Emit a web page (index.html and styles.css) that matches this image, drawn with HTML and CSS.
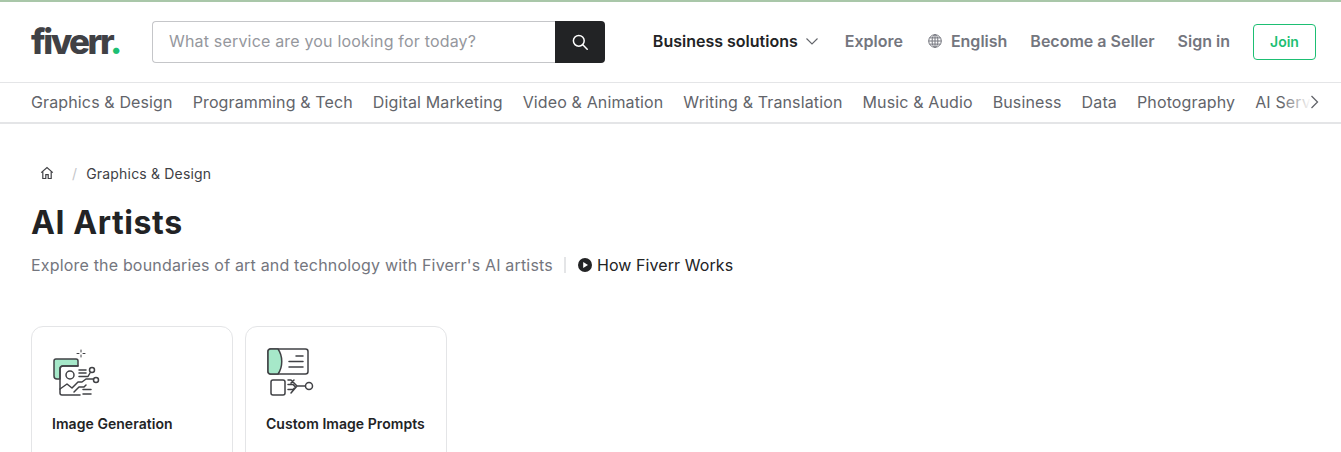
FILE: index.html
```html
<!DOCTYPE html>
<html lang="en">
<head>
  <meta charset="UTF-8">
  <title>AI Artists - Fiverr</title>
  <link rel="stylesheet" href="styles.css">
</head>
<body>
  <header class="header">
    <a class="logo">fiverr<span class="logo-dot">.</span></a>
    <form class="search">
      <input class="search-input" type="text" placeholder="What service are you looking for today?">
      <button class="search-btn" type="button" aria-label="Search">
        <svg width="16" height="16" viewBox="0 0 16 16" fill="none" stroke="#fff" stroke-width="1.5"><circle cx="6.8" cy="6.8" r="5.4"/><path d="M10.8 10.8l4.4 4.4" stroke-linecap="round"/></svg>
      </button>
    </form>
    <nav class="top-links">
      <a class="top-link top-link-dark">Business solutions
        <svg class="top-chevron" width="14" height="14" viewBox="0 0 14 14" fill="none" stroke="#62646a" stroke-width="1.1"><path d="M1.5 4.5L7 10l5.5-5.5"/></svg>
      </a>
      <a class="top-link">Explore</a>
      <a class="top-link top-link-lang">
        <svg width="14" height="14" viewBox="0 0 14 14" fill="none" stroke="#74767e" stroke-width="1"><circle cx="7" cy="7" r="6.3"/><ellipse cx="7" cy="7" rx="2.9" ry="6.3"/><path d="M7 .7v12.6M.7 7h12.6M1.5 3.9h11M1.5 10.1h11"/></svg>
        English</a>
      <a class="top-link">Become a Seller</a>
      <a class="top-link">Sign in</a>
      <a class="join">Join</a>
    </nav>
  </header>

  <div class="cats">
    <ul class="cats-list">
      <li>Graphics &amp; Design</li>
      <li>Programming &amp; Tech</li>
      <li>Digital Marketing</li>
      <li>Video &amp; Animation</li>
      <li>Writing &amp; Translation</li>
      <li>Music &amp; Audio</li>
      <li>Business</li>
      <li>Data</li>
      <li>Photography</li>
      <li>AI Services</li>
    </ul>
    <div class="cats-fade">
      <svg width="10" height="14" viewBox="0 0 10 14" fill="none" stroke="#62646a" stroke-width="1.3"><path d="M1.5 1l6 6-6 6"/></svg>
    </div>
  </div>

  <main class="main">
    <div class="crumbs">
      <svg class="crumb-home" width="14" height="14" viewBox="0 0 14 14" fill="none" stroke="#404145" stroke-width="1.2"><path d="M1.2 6.6L7 1.6l5.8 5M2.8 5.6v6.9h3V8.6h2.4v3.9h3V5.6"/></svg>
      <span class="crumb-sep">/</span>
      <span class="crumb">Graphics &amp; Design</span>
    </div>
    <h1 class="title">AI Artists</h1>
    <div class="sub">
      <span>Explore the boundaries of art and technology with Fiverr's AI artists</span>
      <span class="sub-line"></span>
      <a class="how">
        <svg width="14" height="14" viewBox="0 0 14 14"><circle cx="7" cy="7" r="7" fill="#222325"/><path d="M5.2 3.9l4.8 3.1-4.8 3.1z" fill="#fff"/></svg>
        How Fiverr Works</a>
    </div>
    <div class="cards">
      <a class="card">
        <svg class="card-icon" width="50" height="50" viewBox="0 0 50 50" fill="none" stroke="#404145" stroke-width="1.5" stroke-linecap="round" stroke-linejoin="round">
          <path d="M1 29V14a2 2 0 0 1 2-2h20a2 2 0 0 1 2 2v5H10a3 3 0 0 0-3 3v10H4a3 3 0 0 1-3-3z" fill="#a6e8c9"/>
          <path d="M28 3v2M28 8v2M24 6.5h2M30 6.5h2" stroke-width="1"/>
          <path d="M25 19H10a3 3 0 0 0-3 3v24a2 2 0 0 0 2 2h18"/>
          <circle cx="17" cy="28" r="4"/>
          <path d="M7 42l7-5 5 4 6-6h4l4-3h7.5"/>
          <path d="M26 23h7M26 26h7M26 29.5h9l2-3.5"/>
          <circle cx="39" cy="23" r="2.5"/><circle cx="43" cy="33" r="2.5"/>
          <path d="M21 45l5-5h5l2-2M30 42.5h8M30 47h8"/>
        </svg>
        <span class="card-label">Image Generation</span>
      </a>
      <a class="card">
        <svg class="card-icon" width="50" height="50" viewBox="0 0 50 50" fill="none" stroke="#404145" stroke-width="1.5" stroke-linecap="round" stroke-linejoin="round">
          <rect x="1" y="2" width="40" height="25" rx="2.5"/>
          <path d="M3.5 2H11c5 7 5 18 0 25H3.5A2.5 2.5 0 0 1 1 24.5v-20A2.5 2.5 0 0 1 3.5 2z" fill="#a6e8c9"/>
          <path d="M29 9h7M22 14.5h14M22 20h14"/>
          <rect x="4" y="33" width="14" height="15" rx="2"/>
          <path d="M21 33h3l6 6h8M21 37.5h5l2.500 2.500-2.500 2.500h-5M24 36l3-3M24 46l6-7"/>
          <circle cx="42" cy="39" r="3.5"/>
        </svg>
        <span class="card-label">Custom Image Prompts</span>
      </a>
    </div>
  </main>
</body>
</html>
```

FILE: styles.css
```css
* {
  margin: 0;
  padding: 0;
  box-sizing: border-box;
}

html, body {
  height: 452px;
  overflow: hidden;
}

body {
  font-family: 'Inter', sans-serif;
  font-size: 16px;
  letter-spacing: 0.18px;
  color: #222325;
  background-color: #fff;
  border-top: 2px solid #a9c7a9;
}

.header {
  height: 81px;
  padding: 0 25px 0 31px;
  display: flex;
  align-items: center;
  border-bottom: 1px solid #e4e5e7;
}

.logo {
  width: 121px;
  font-size: 35px;
  font-weight: 800;
  letter-spacing: -2.5px;
  color: #404145;
  line-height: 1;
  margin-top: -2px;
}

.logo-dot {
  color: #1dbf73;
}

.search {
  width: 453px;
  height: 42px;
  display: flex;
}

.search-input {
  flex: 1;
  min-width: 0;
  padding: 0 16px 2px;
  font-family: inherit;
  font-size: 16px;
  letter-spacing: inherit;
  border: 1px solid #c5c6c9;
  border-right: none;
  border-radius: 4px 0 0 4px;
  outline: none;
}

.search-input::placeholder {
  color: #95979d;
}

.search-btn {
  width: 50px;
  border: none;
  border-radius: 0 4px 4px 0;
  background-color: #222325;
  display: flex;
  align-items: center;
  justify-content: center;
}

.top-links {
  margin-left: auto;
  display: flex;
  align-items: center;
  gap: 23px;
  margin-top: -2px;
  letter-spacing: 0;
}

.top-link {
  display: flex;
  align-items: center;
  gap: 9px;
  font-weight: 600;
  color: #74767e;
  white-space: nowrap;
}

.top-link-dark {
  gap: 7px;
  color: #222325;
}

.top-link-lang {
  margin-left: 2px;
}

.top-chevron {
  margin-right: 3px;
}

.join {
  width: 63px;
  height: 36px;
  margin-top: 2px;
  padding-bottom: 2px;
  display: flex;
  align-items: center;
  justify-content: center;
  font-size: 14px;
  font-weight: 600;
  color: #1dbf73;
  border: 1px solid #1dbf73;
  border-radius: 4px;
}

.cats {
  position: relative;
  height: 41px;
  padding: 0 31px;
  overflow: hidden;
  border-bottom: 2px solid #e4e5e7;
}

.cats-list {
  list-style: none;
  display: flex;
  gap: 20px;
  height: 38px;
  align-items: center;
  color: #62646a;
  letter-spacing: 0.13px;
  white-space: nowrap;
}

.cats-fade {
  position: absolute;
  top: 0;
  right: 0;
  width: 60px;
  height: 38px;
  padding-right: 21px;
  display: flex;
  align-items: center;
  justify-content: flex-end;
  background: linear-gradient(90deg, rgba(255, 255, 255, 0), #fff 50%);
}

.main {
  padding: 0 31px;
}

.crumbs {
  margin-top: 39px;
  height: 20px;
  display: flex;
  align-items: center;
  font-size: 14px;
  color: #404145;
}

.crumb-home {
  margin-left: 9px;
}

.crumb-sep {
  margin: 0 9px 0 18px;
  color: #c5c6c9;
}

.title {
  margin-top: 20px;
  font-size: 32px;
  line-height: 40px;
  font-weight: 700;
  letter-spacing: 0.6px;
}

.sub {
  margin-top: 10px;
  display: flex;
  align-items: center;
  height: 24px;
  color: #74767e;
  letter-spacing: 0.18px;
}

.sub-line {
  width: 2px;
  height: 16px;
  margin: 0 12px 0 11px;
  background-color: #e4e5e7;
}

.how {
  display: flex;
  align-items: center;
  gap: 5px;
  color: #222325;
  letter-spacing: 0.08px;
}

.cards {
  margin-top: 49px;
  display: flex;
  gap: 12px;
}

.card {
  width: 202px;
  height: 140px;
  padding: 20px;
  border: 1px solid #e4e5e7;
  border-radius: 12px;
  display: flex;
  flex-direction: column;
  gap: 18px;
}

.card-icon {
  margin-left: 1px;
}

.card-label {
  font-size: 14px;
  font-weight: 600;
  letter-spacing: 0.05px;
}
```
